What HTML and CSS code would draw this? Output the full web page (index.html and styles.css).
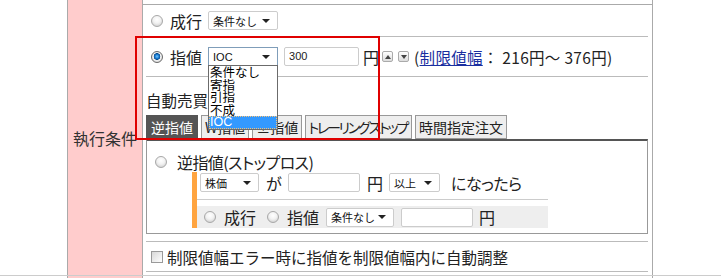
FILE: index.html
```html
<!DOCTYPE html>
<html lang="ja">
<head>
    <meta charset="UTF-8">
    <title>執行条件</title>
    <link rel="stylesheet" href="styles.css">
</head>
<body>
<div class="order-table">
    <div class="label-cell">執行条件</div>
    <div class="content-cell">
        <div class="prev-row"></div>

        <div class="row row-market">
            <span class="radio"></span>
            <span class="opt-label">成行</span>
            <div class="select sel-cond"><span>条件なし</span><i class="arrow"></i></div>
        </div>
        <div class="sep"></div>

        <div class="row row-limit">
            <span class="radio checked"></span>
            <span class="opt-label">指値</span>
            <div class="select sel-cond sel-open">
                <span class="latin">IOC</span><i class="arrow"></i>
                <ul class="dropdown">
                    <li>条件なし</li>
                    <li>寄指</li>
                    <li>引指</li>
                    <li>不成</li>
                    <li class="picked latin">IOC</li>
                </ul>
            </div>
            <div class="input price latin">300</div>
            <span class="yen">円</span>
            <span class="step"><i class="tri-up"></i></span>
            <span class="step"><i class="tri-down"></i></span>
            <span class="range">(<a href="#">制限値幅</a>： 216円～ 376円)</span>
        </div>
        <div class="sep"></div>

        <div class="auto">
            <div class="auto-title">自動売買</div>
            <div class="tabs">
                <div class="tab active">逆指値</div>
                <div class="tab">W指値</div>
                <div class="tab">±指値</div>
                <div class="tab tab-narrow">トレーリングストップ</div>
                <div class="tab">時間指定注文</div>
            </div>
            <div class="tab-panel">
                <div class="row stop-row">
                    <span class="radio"></span>
                    <span class="stop-label">逆指値(ストップロス)</span>
                </div>
                <div class="cond">
                    <div class="row cond-trigger">
                        <div class="select sel-base"><span>株価</span><i class="arrow"></i></div>
                        <span class="ga">が</span>
                        <div class="input trigger-price"></div>
                        <span class="yen2">円</span>
                        <div class="select sel-dir"><span>以上</span><i class="arrow"></i></div>
                        <span class="then">になったら</span>
                    </div>
                    <div class="cond-sep"></div>
                    <div class="row cond-exec">
                        <span class="radio"></span>
                        <span class="exec-label">成行</span>
                        <span class="radio radio-gap"></span>
                        <span class="exec-label">指値</span>
                        <div class="select sel-exec"><span>条件なし</span><i class="arrow"></i></div>
                        <div class="input exec-price"></div>
                        <span class="yen3">円</span>
                    </div>
                </div>
            </div>
        </div>
        <div class="sep"></div>

        <div class="row row-adjust">
            <span class="checkbox"></span>
            <span class="adjust-label">制限値幅エラー時に指値を制限値幅内に自動調整</span>
        </div>
        <div class="sep"></div>

        <div class="focus-frame"></div>
    </div>
</div>
<div class="frame-line"></div>
<div class="order-table next-row">
    <div class="label-cell"></div>
    <div class="content-cell"></div>
</div>
</body>
</html>
```

FILE: styles.css
```css
* {
    box-sizing: border-box;
}

body {
    margin: 0;
    width: 721px;
    height: 278px;
    overflow: hidden;
    background-color: #ffffff;
    color: #222222;
    font-family: "Noto Sans CJK JP", sans-serif;
}

.latin {
    font-family: "Liberation Sans", Arial, sans-serif;
}

.order-table {
    display: flex;
    margin-left: 67px;
    width: 586px;
    height: 275px;
}

.label-cell {
    width: 76px;
    background-color: #ffcccc;
    border-left: 1px solid #aaaaaa;
    border-right: 1px solid #aaaaaa;
    display: flex;
    align-items: center;
    justify-content: center;
    font-size: 16px;
    color: #333333;
}

.content-cell {
    width: 510px;
    border-right: 1px solid #aaaaaa;
    position: relative;
    display: flex;
    flex-direction: column;
}

.prev-row {
    height: 5px;
    border-bottom: 1px solid #aaaaaa;
}

.row {
    display: flex;
    align-items: center;
}

.sep {
    height: 1px;
    background-color: #bbbbbb;
    margin: 0 4px 0 3px;
}

.row-market {
    height: 31px;
    padding-left: 8px;
}

.row-limit {
    height: 39px;
    padding-left: 8px;
}

.opt-label {
    margin-left: 7px;
    font-size: 16px;
    line-height: 20px;
}

/* radio / checkbox look */
.radio {
    flex: none;
    width: 12px;
    height: 12px;
    border-radius: 50%;
    border: 1px solid #a8a8a8;
    background: radial-gradient(circle at 50% 35%, #ffffff 0, #f2f2f2 45%, #c4c4c4 100%);
}

.radio.checked {
    border-color: #6a6a6a;
    background: radial-gradient(circle at 50% 45%, #6cc6ff 0, #1170c8 30%, #0b4d8c 42%, #f4f4f4 48%, #c8c8c8 100%);
}

.checkbox {
    flex: none;
    width: 12px;
    height: 12px;
    border: 1px solid #9a9a9a;
    background: linear-gradient(135deg, #d8d8d8, #ffffff);
}

/* fake select boxes */
.select {
    position: relative;
    flex: none;
    display: flex;
    align-items: center;
    justify-content: space-between;
    height: 19px;
    padding: 0 7px 0 4px;
    border: 1px solid #cccccc;
    border-radius: 2px;
    background-color: #ffffff;
    font-size: 11px;
    color: #111111;
}

.arrow {
    width: 0;
    height: 0;
    border-top: 4px solid #222222;
    border-left: 4px solid transparent;
    border-right: 4px solid transparent;
}

.sel-cond {
    width: 70px;
    margin-left: 6px;
}

.sel-open {
    border-color: #7f9db9;
    border-radius: 0;
}

.dropdown {
    position: absolute;
    top: 100%;
    left: -1px;
    z-index: 2;
    width: 70px;
    margin: 0;
    padding: 0;
    list-style: none;
    border: 1px solid #6b6b6b;
    background-color: #ffffff;
    font-size: 12.5px;
    color: #000000;
}

.dropdown li {
    height: 12.6px;
    line-height: 12.6px;
    padding-left: 1px;
}

.dropdown .picked {
    background-color: #3399ff;
    color: #ffffff;
    outline: 1px dotted #f6c27a;
    outline-offset: -1px;
}

.input {
    flex: none;
    height: 19px;
    border: 1px solid #cccccc;
    border-radius: 2px;
    background-color: #ffffff;
    font-size: 11px;
    line-height: 17px;
    padding-left: 4px;
}

.price {
    width: 75px;
    margin-left: 6px;
}

.yen {
    margin-left: 4px;
    font-size: 16px;
}

.step {
    flex: none;
    display: flex;
    align-items: center;
    justify-content: center;
    width: 11px;
    height: 11px;
    margin-left: 3px;
    border: 1px solid #aaaaaa;
    border-radius: 2px;
    background: linear-gradient(#ffffff, #dddddd);
}

.step + .step {
    margin-left: 5px;
}

.tri-up {
    border-bottom: 4px solid #444444;
    border-left: 3px solid transparent;
    border-right: 3px solid transparent;
}

.tri-down {
    border-top: 4px solid #444444;
    border-left: 3px solid transparent;
    border-right: 3px solid transparent;
}

.range {
    margin-left: 5px;
    font-size: 15.5px;
    white-space: nowrap;
    letter-spacing: 0.3px;
}

.range a {
    color: #1a2fa0;
    text-decoration: underline;
}

/* 自動売買 */
.auto {
    display: flex;
    flex-direction: column;
}

.auto-title {
    margin: 13px 0 0 3px;
    height: 20px;
    font-size: 15.5px;
    line-height: 20px;
}

.tabs {
    display: flex;
    gap: 3px;
    margin: 5px 0 0 3px;
    height: 24px;
}

.tab {
    display: flex;
    align-items: center;
    padding: 0 3px;
    border: 1px solid #999999;
    background-color: #eeeeee;
    font-size: 14px;
    color: #222222;
    white-space: nowrap;
}

.tab.active {
    background-color: #555555;
    border-color: #555555;
    color: #ffffff;
    padding: 0 4px;
}

.tab-narrow {
    font-feature-settings: "palt";
    letter-spacing: -2.2px;
    padding: 0 4px 0 2px;
}

.tab-panel {
    margin: 0 4px 7px 3px;
    border: 1px solid #999999;
    border-top: 2px solid #555555;
    padding-bottom: 5px;
}

.stop-row {
    margin-top: 10px;
    height: 21px;
    padding-left: 8px;
}

.stop-label {
    margin-left: 10px;
    font-size: 16px;
    font-feature-settings: "palt";
    letter-spacing: -0.6px;
}

.cond {
    margin-left: 45px;
    width: 356px;
    border-left: 5px solid #ffa43f;
}

.cond-trigger {
    height: 21px;
    padding-left: 3px;
}

.sel-base {
    width: 59px;
}

.ga {
    margin-left: 7px;
    font-size: 16px;
}

.trigger-price {
    width: 72px;
    margin-left: 6px;
}

.yen2 {
    margin-left: 7px;
    font-size: 16px;
}

.sel-dir {
    width: 51px;
    margin-left: 6px;
}

.then {
    margin-left: 11px;
    font-size: 16px;
    font-feature-settings: "palt";
    letter-spacing: -0.5px;
}

.cond-sep {
    height: 1px;
    margin-top: 6px;
    background-color: #cccccc;
}

.cond-exec {
    margin-top: 6px;
    height: 22px;
    padding-left: 7px;
    background-color: #eeeeee;
}

.exec-label {
    margin-left: 8px;
    font-size: 16px;
}

.radio-gap {
    margin-left: 11px;
}

.sel-exec {
    width: 68px;
    margin-left: 7px;
}

.exec-price {
    width: 72px;
    margin-left: 7px;
}

.yen3 {
    margin-left: 6px;
    font-size: 16px;
}

.row-adjust {
    height: 29px;
    padding-left: 8px;
}

.adjust-label {
    margin-left: 4px;
    font-size: 15.5px;
    white-space: nowrap;
}

/* red highlight drawn over the limit-order area */
.focus-frame {
    position: absolute;
    left: -8px;
    top: 36px;
    width: 245px;
    height: 104px;
    border: 2px solid #e00000;
    z-index: 3;
}

.frame-line {
    height: 1px;
    background-color: #cccccc;
}

.next-row {
    height: 2px;
}
```
